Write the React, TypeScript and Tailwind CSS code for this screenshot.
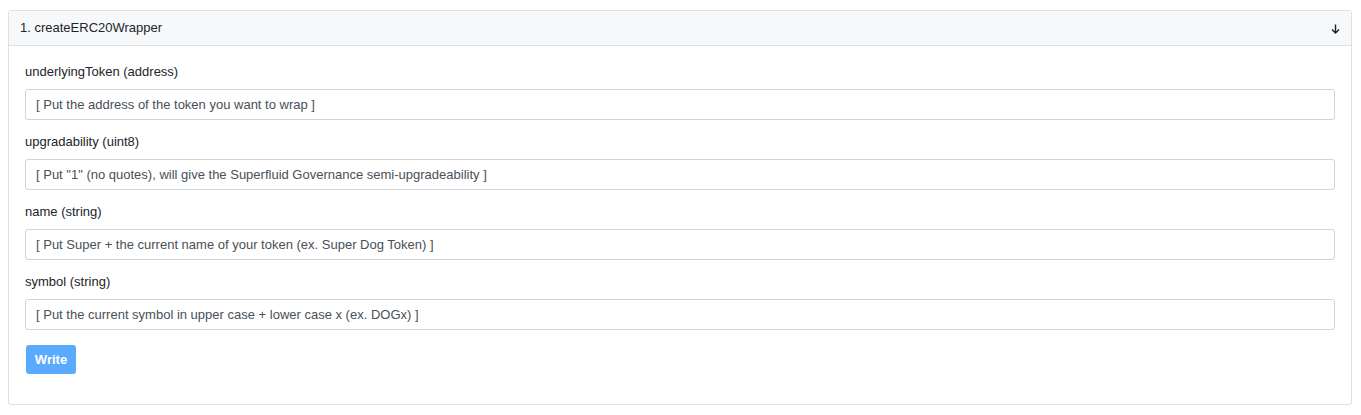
import React from 'react'

const fields = [
  { label: 'underlyingToken (address)', placeholder: '[ Put the address of the token you want to wrap ]' },
  { label: 'upgradability (uint8)', placeholder: '[ Put "1" (no quotes), will give the Superfluid Governance semi-upgradeability ]' },
  { label: 'name (string)', placeholder: '[ Put Super + the current name of your token (ex. Super Dog Token) ]' },
  { label: 'symbol (string)', placeholder: '[ Put the current symbol in upper case + lower case x (ex. DOGx) ]' },
]

export default function App() {
  return (
    <div className="min-h-screen bg-white pt-[10px] pl-[8px] pr-[9px] font-['Liberation_Sans',Arial,sans-serif]">
      <div className="border border-[#dfe1e5] rounded-[3px] h-[395px]">
        {/* Header */}
        <div className="h-[35px] flex items-center justify-between bg-[#f7f8fa] border-b border-[#dfe1e5] pl-[11px] pr-[11px]">
          <span className="text-[13px] text-[#212529]">1. createERC20Wrapper</span>
          <svg width="9" height="10" viewBox="0 0 9 10" className="text-[#222] mt-[2px]">
            <path d="M4.5 0.5V9M1 5.5L4.5 9L8 5.5" fill="none" stroke="currentColor" strokeWidth="1.4" />
          </svg>
        </div>

        {/* Body */}
        <div className="px-4 pt-4">
          {fields.map(f => (
            <div key={f.label} className="mb-[12px]">
              <label className="block text-[13px] leading-[20px] text-[#212529] mb-[7px]">{f.label}</label>
              <input
                readOnly
                placeholder={f.placeholder}
                className="w-full h-[31px] border border-[#ced4da] rounded-[3px] px-[10px] text-[13px] text-[#495057] placeholder:text-[#495057] focus:outline-none"
              />
            </div>
          ))}
          <button
            disabled
            className="mt-[3px] ml-[1px] w-[50px] h-[29px] rounded-[3px] bg-[#5aabff] text-white text-[13px] font-bold"
          >
            Write
          </button>
        </div>
      </div>
    </div>
  )
}
